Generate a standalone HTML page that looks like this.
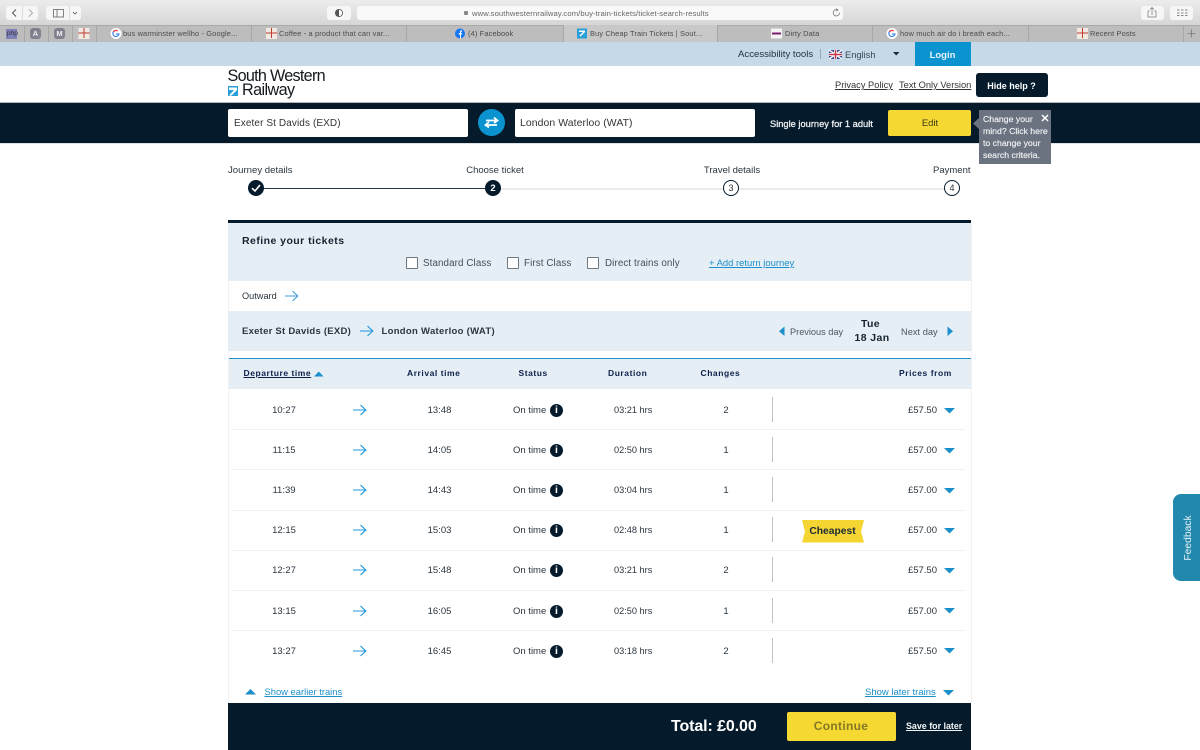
<!DOCTYPE html>
<html lang="en"><head><meta charset="utf-8"><title>Buy Cheap Train Tickets</title>
<style>
html,body{margin:0;padding:0;width:1200px;height:750px;overflow:hidden;background:#fff}
body{position:relative;font-family:"Liberation Sans",sans-serif;color:#1c2a36}
.b{position:absolute}
.t{position:absolute;white-space:nowrap;line-height:14px;font-size:9.5px;color:#2b3640;margin-top:1px}
.z{margin-top:0}
.c{transform:translateX(-50%)}
.r{text-align:right}
.tab{font-size:7.4px;color:#4a4a4a;letter-spacing:.15px;margin-top:0}
.h{font-weight:bold;font-size:8.5px;color:#0b1f4a;letter-spacing:.55px;margin-top:-1px}
.d{left:614px;font-size:9.2px;margin-top:0}
.sep{position:absolute;left:233px;width:732px;height:1px;background:#eef0f2}
.vd{position:absolute;left:772px;width:1px;height:25px;background:#bfc3c6}
.tabsep{position:absolute;top:25px;width:1px;height:17px;background:#a8a8a8}
.cb{position:absolute;width:12px;height:12px;box-sizing:border-box;border:1px solid #6f7780;background:#fff;border-radius:1px}
.i{position:absolute;left:550px;width:13px;height:13px;background:#051b2c;border-radius:50%}
.it{position:absolute;white-space:nowrap;left:556.5px;transform:translateX(-50%);font-size:10.5px;line-height:13px;font-weight:bold;color:#fff}
svg{position:absolute;overflow:visible}
.lnk{color:#1b8fc9;text-decoration:underline}
</style></head><body>

<!-- browser toolbar -->
<div class="b" style="left:0;top:0;width:1200px;height:25px;background:linear-gradient(#ececec,#d6d6d6)"></div>
<div class="b" style="left:6px;top:6px;width:32px;height:14px;background:#f6f6f6;border-radius:3px"></div>
<div class="b" style="left:22px;top:6px;width:1px;height:14px;background:#dcdcdc"></div>
<svg style="left:0;top:0" width="100" height="25"><path d="M16 9.5L12.5 13L16 16.5" fill="none" stroke="#555" stroke-width="1"/><path d="M29 9.5L32.5 13L29 16.5" fill="none" stroke="#aaa" stroke-width="1"/></svg>
<div class="b" style="left:46px;top:6px;width:35px;height:14px;background:#f6f6f6;border-radius:3px"></div>
<div class="b" style="left:69px;top:6px;width:1px;height:14px;background:#dcdcdc"></div>
<svg style="left:0;top:0" width="100" height="25"><rect x="53.5" y="9.5" width="10" height="7.5" fill="none" stroke="#666" stroke-width=".8"/><path d="M57 9.5V17" stroke="#666" stroke-width=".8"/><path d="M73 12L75 14L77 12" fill="none" stroke="#555" stroke-width=".8"/></svg>
<div class="b" style="left:327px;top:6px;width:24px;height:14px;background:#f6f6f6;border-radius:3px"></div>
<svg style="left:0;top:0" width="360" height="25"><circle cx="339" cy="13" r="3.6" fill="#fff" stroke="#555" stroke-width=".8"/><path d="M339 9.4a3.6 3.6 0 0 0 0 7.2z" fill="#555"/></svg>
<div class="b" style="left:357px;top:6px;width:486px;height:14px;background:#f9f9f9;border-radius:3px"></div>
<div class="b" style="left:464px;top:11px;width:4px;height:4px;background:#888;border-radius:1px"></div>
<div class="t z" style="left:472px;top:8px;line-height:11px;font-size:7.65px;color:#666;letter-spacing:.1px">www.southwesternrailway.com/buy-train-tickets/ticket-search-results</div>
<svg style="left:0;top:0" width="850" height="25"><path d="M838 10a3.2 3.2 0 1 0 1.6 2.6" fill="none" stroke="#777" stroke-width=".8"/><path d="M836 8.5l2 1.5l-2 1.3" fill="none" stroke="#777" stroke-width=".7"/></svg>
<div class="b" style="left:1141px;top:6px;width:23px;height:14px;background:#f6f6f6;border-radius:3px"></div>
<div class="b" style="left:1170px;top:6px;width:23px;height:14px;background:#f6f6f6;border-radius:3px"></div>
<svg style="left:0;top:0" width="1200" height="25"><path d="M1149.5 11h-1.5v6h8v-6h-1.5M1152 15V8M1150 9.5l2-2l2 2" fill="none" stroke="#777" stroke-width=".7"/><path d="M1177 10h2.5M1181 10h2.5M1185 10h2.5M1177 13h2.5M1181 13h2.5M1185 13h2.5M1177 15.5h2.5M1181 15.5h2.5M1185 15.5h2.5" stroke="#888" stroke-width="1"/></svg>

<!-- tab bar -->
<div class="b" style="left:0;top:25px;width:1200px;height:17px;background:#bdbdbd;border-top:1px solid #aaa;box-sizing:border-box"></div>
<div class="b" style="left:563px;top:25px;width:154px;height:17px;background:#c8c8c8"></div>
<div class="tabsep" style="left:24px"></div><div class="tabsep" style="left:48px"></div><div class="tabsep" style="left:72px"></div><div class="tabsep" style="left:96px"></div><div class="tabsep" style="left:251px"></div><div class="tabsep" style="left:406px"></div><div class="tabsep" style="left:563px"></div><div class="tabsep" style="left:717px"></div><div class="tabsep" style="left:872px"></div><div class="tabsep" style="left:1028px"></div><div class="tabsep" style="left:1183px"></div>
<div class="b" style="left:6px;top:29px;width:11px;height:10px;background:#7e80b8"></div>
<div class="t z" style="left:7px;top:28px;line-height:11px;font-size:6.5px;color:#333">php</div>
<div class="b" style="left:30px;top:28px;width:11px;height:11px;background:#81818f;border-radius:3px"></div>
<div class="t c z" style="left:35.5px;top:28px;line-height:11px;font-size:7.5px;font-weight:bold;color:#eee">A</div>
<div class="b" style="left:54px;top:28px;width:11px;height:11px;background:#81818f;border-radius:3px"></div>
<div class="t c z" style="left:59.5px;top:28px;line-height:11px;font-size:7.5px;font-weight:bold;color:#eee">M</div>
<svg style="left:0;top:0" width="1200" height="42">
<rect x="78.5" y="28" width="11" height="11" fill="#f1e9e2"/><path d="M78.5 33h11M84 28v10" stroke="#c0392b" stroke-width="1"/>
<rect x="266" y="28" width="11" height="11" fill="#f1e9e2"/><path d="M266 33h11M271.5 28v10" stroke="#c0392b" stroke-width="1"/>
<rect x="1077" y="28" width="11" height="11" fill="#f1e9e2"/><path d="M1077 33h11M1082.5 28v10" stroke="#c0392b" stroke-width="1"/>
<circle cx="116" cy="33.5" r="5.5" fill="#fff"/><path d="M116 30.5a3 3 0 1 0 2.9 3.5H116" fill="none" stroke="#4285f4" stroke-width="1.3"/><path d="M113.5 32a3 3 0 0 1 4.5-1" fill="none" stroke="#ea4335" stroke-width="1.3"/>
<circle cx="892" cy="33.5" r="5.5" fill="#fff"/><path d="M892 30.5a3 3 0 1 0 2.9 3.5H892" fill="none" stroke="#4285f4" stroke-width="1.3"/><path d="M889.5 32a3 3 0 0 1 4.5-1" fill="none" stroke="#ea4335" stroke-width="1.3"/>
<circle cx="460" cy="33.5" r="5" fill="#1877f2"/><path d="M460 38.5v-4h-1.2v-1.5h1.2v-1.3c0-1 .6-1.5 2-1.4v1.3c-.8 0-1 .1-1 .6v.8h1l-.2 1.5h-.8v4z" fill="#fff"/>
<rect x="577" y="28.5" width="10" height="10" fill="#2a9fd8"/><path d="M579 30.5h6v1.5l-4.5 4.5-1-1 3.5-3.5h-4z" fill="#fff"/>
<rect x="771" y="28.5" width="11" height="10" fill="#f4f4f4"/><path d="M772 33.5h9" stroke="#7a1f6a" stroke-width="2"/>
</svg>
<div class="t tab" style="left:123px;top:28px;line-height:11px">bus warminster wellho - Google...</div>
<div class="t tab" style="left:279px;top:28px;line-height:11px">Coffee - a product that can var...</div>
<div class="t tab" style="left:468px;top:28px;line-height:11px">(4) Facebook</div>
<div class="t tab" style="left:590px;top:28px;line-height:11px">Buy Cheap Train Tickets | Sout...</div>
<div class="t tab" style="left:785px;top:28px;line-height:11px">Dirty Data</div>
<div class="t tab" style="left:900px;top:28px;line-height:11px">how much air do i breath each...</div>
<div class="t tab" style="left:1090px;top:28px;line-height:11px">Recent Posts</div>
<svg style="left:0;top:0" width="1200" height="42"><path d="M1191.5 29.5v8M1187.5 33.5h8" stroke="#777" stroke-width=".8"/></svg>

<!-- top strip -->
<div class="b" style="left:0;top:42px;width:1200px;height:24px;background:#c5d9e8"></div>
<div class="t" style="left:738px;top:47px;font-size:9.6px;color:#26323c">Accessibility tools</div>
<div class="b" style="left:820px;top:49px;width:1px;height:10px;background:#9aa8b2"></div>
<svg style="left:829px;top:50px" width="13" height="9" viewBox="0 0 13 9"><rect width="13" height="9" fill="#3d4f8f"/><path d="M0 0L13 9M13 0L0 9" stroke="#fff" stroke-width="1.5"/><path d="M6.5 0V9M0 4.5H13" stroke="#fff" stroke-width="3"/><path d="M6.5 0V9M0 4.5H13" stroke="#c9374a" stroke-width="1.5"/></svg>
<div class="t" style="left:845px;top:47px;font-size:9.3px;color:#3a4650">English</div>
<svg style="left:893px;top:52px" width="7" height="4"><path d="M0 0H6.5L3.25 3.5Z" fill="#1c2a36"/></svg>
<div class="b" style="left:915px;top:42px;width:56px;height:24px;background:#0b93d0"></div>
<div class="t c" style="left:942.5px;top:48px;font-size:9.5px;font-weight:bold;color:#e8f4fb">Login</div>

<!-- header -->
<div class="t z" style="left:227.5px;top:67.5px;line-height:17px;font-size:16.2px;color:#14191e;letter-spacing:-.72px">South Western</div>
<div class="t z" style="left:242px;top:81.5px;line-height:17px;font-size:16.2px;color:#14191e;letter-spacing:-.6px">Railway</div>
<svg style="left:228px;top:86px" width="10" height="10" viewBox="0 0 10 10"><rect width="10" height="10" fill="#2a9fd8"/><path d="M1 1.5H9V4L3.5 9.5H1L6 4H1Z" fill="#fff"/></svg>
<div class="t" style="left:835px;top:77px;font-size:9.3px;color:#333;text-decoration:underline">Privacy Policy</div>
<div class="t" style="left:899px;top:77px;font-size:9.3px;color:#333;text-decoration:underline">Text Only Version</div>
<div class="b" style="left:976px;top:73px;width:72px;height:24px;background:#051b2c;border-radius:3px"></div>
<div class="t c" style="left:1011.5px;top:78px;font-size:9px;font-weight:bold;color:#fff">Hide help ?</div>

<!-- search bar -->
<div class="b" style="left:0;top:102px;width:1200px;height:1px;background:#b5b8ba"></div>
<div class="b" style="left:0;top:103px;width:1200px;height:40px;background:#051b2c"></div>
<div class="b" style="left:0;top:143px;width:1200px;height:1px;background:#dfe2e4"></div>
<div class="b" style="left:228px;top:109px;width:240px;height:28px;background:#fff;border-radius:2px"></div>
<div class="t" style="left:234px;top:116px;font-size:10px;color:#333;letter-spacing:.1px">Exeter St Davids (EXD)</div>
<div class="b" style="left:478px;top:109px;width:27px;height:27px;background:#0b93d0;border-radius:50%"></div>
<svg style="left:478px;top:109px" width="27" height="27"><path d="M8 11.5H19M16 8.5L19.5 11.5L16 14M19 16H8M11 13L7.5 16L11 18.5" fill="none" stroke="#fff" stroke-width="1.8"/></svg>
<div class="b" style="left:515px;top:109px;width:240px;height:28px;background:#fff;border-radius:2px"></div>
<div class="t" style="left:520px;top:116px;font-size:10.4px;color:#333;letter-spacing:.1px">London Waterloo (WAT)</div>
<div class="t" style="left:770px;top:116px;font-size:9.3px;color:#f2f4f6;-webkit-text-stroke:.25px #f2f4f6">Single journey for 1 adult</div>
<div class="b" style="left:888px;top:110px;width:83px;height:26px;background:#f5d831;border-radius:2px"></div>
<div class="t c" style="left:930px;top:116px;font-size:9.5px;color:#3a3a1a">Edit</div>
<div class="b" style="left:979px;top:110px;width:72px;height:54px;background:#6b7280"></div>
<svg style="left:973px;top:117px" width="7" height="14"><path d="M7 0V13L0 6.5Z" fill="#6b7280"/></svg>
<div class="t z" style="left:983px;top:113px;font-size:8.7px;line-height:12.1px;color:#f2f3f5;-webkit-text-stroke:.15px #f2f3f5">Change your<br>mind? Click here<br>to change your<br>search criteria.</div>
<svg style="left:1041px;top:114px" width="8" height="8"><path d="M1 1L7 7M7 1L1 7" stroke="#fff" stroke-width="1.5"/></svg>

<!-- steps -->
<div class="t" style="left:228px;top:163px;font-size:9.6px">Journey details</div>
<div class="t c" style="left:495px;top:163px;font-size:9.5px">Choose ticket</div>
<div class="t c" style="left:732px;top:163px;font-size:9.5px">Travel details</div>
<div class="t" style="left:933px;top:163px;font-size:9.5px">Payment</div>
<div class="b" style="left:256px;top:188px;width:237px;height:1px;background:#2c3843"></div>
<div class="b" style="left:493px;top:188px;width:459px;height:2px;background:#eceaec"></div>
<div class="b" style="left:248px;top:180px;width:16px;height:16px;background:#051b2c;border-radius:50%"></div>
<svg style="left:248px;top:180px" width="16" height="16"><path d="M4 8.2L7 11L12 5" fill="none" stroke="#fff" stroke-width="1.6"/></svg>
<div class="b" style="left:485px;top:180px;width:16px;height:16px;background:#051b2c;border-radius:50%"></div>
<div class="t c" style="left:493px;top:181px;font-size:9.5px;font-weight:bold;color:#fff">2</div>
<div class="b" style="left:723px;top:180px;width:14px;height:14px;background:#fff;border:1.3px solid #051b2c;border-radius:50%"></div>
<div class="t c" style="left:731px;top:180px;font-size:9px;color:#333">3</div>
<div class="b" style="left:944px;top:180px;width:14px;height:14px;background:#fff;border:1.3px solid #051b2c;border-radius:50%"></div>
<div class="t c" style="left:952px;top:180px;font-size:9px;color:#333">4</div>

<!-- main frame -->
<div class="b" style="left:228px;top:223px;width:1px;height:480px;background:#f0f1f2"></div>
<div class="b" style="left:971px;top:223px;width:1px;height:480px;background:#f0f1f2"></div>

<!-- refine -->
<div class="b" style="left:228px;top:220px;width:743px;height:3px;background:#051b2c"></div>
<div class="b" style="left:228px;top:223px;width:743px;height:58px;background:#e6eef5"></div>
<div class="t z" style="left:242px;top:233.5px;font-size:10.5px;font-weight:bold;color:#14232f;letter-spacing:.45px">Refine your tickets</div>
<div class="cb" style="left:406px;top:257px"></div>
<div class="t" style="left:423px;top:256px;font-size:9.8px;color:#444e57;letter-spacing:.1px">Standard Class</div>
<div class="cb" style="left:507px;top:257px"></div>
<div class="t" style="left:524px;top:256px;font-size:9.8px;color:#444e57;letter-spacing:.1px">First Class</div>
<div class="cb" style="left:587px;top:257px"></div>
<div class="t" style="left:605px;top:256px;font-size:9.8px;color:#444e57;letter-spacing:.1px">Direct trains only</div>
<div class="t lnk" style="left:709px;top:256px;font-size:9.45px;color:#1b8fc9">+ Add return journey</div>

<!-- outward -->
<div class="t z" style="left:242px;top:289px;font-size:9.2px">Outward</div>
<svg style="left:285px;top:290px" width="14" height="12"><path d="M0 6H12.5M7.5 1L12.800 6L7.500 11" fill="none" stroke="#3f9fdc" stroke-width="1.1"/></svg>

<!-- route header -->
<div class="b" style="left:228px;top:311px;width:743px;height:40px;background:#e6eef5"></div>
<div class="t" style="left:242px;top:324px;font-size:9.5px;font-weight:bold;color:#2b3640;letter-spacing:.25px">Exeter St Davids (EXD)</div>
<svg style="left:360px;top:325px" width="14" height="12"><path d="M0 6H12.5M7.5 1L12.8 6L7.5 11" fill="none" stroke="#1b95da" stroke-width="1.1"/></svg>
<div class="t" style="left:381.5px;top:324px;font-size:9.5px;font-weight:bold;color:#2b3640;letter-spacing:.3px">London Waterloo (WAT)</div>
<svg style="left:779px;top:326px" width="6" height="11"><path d="M5.5 .5V10L0 5.25Z" fill="#1b8fc9"/></svg>
<div class="t z" style="left:790px;top:324.5px;font-size:9.2px;color:#4a545d">Previous day</div>
<div class="t c z" style="left:870.5px;top:316.5px;font-size:10.5px;font-weight:bold;color:#14232f;letter-spacing:.4px">Tue</div>
<div class="t c z" style="left:872px;top:331px;font-size:10.5px;font-weight:bold;color:#14232f;letter-spacing:.4px">18 Jan</div>
<div class="t z" style="left:901px;top:324.5px;font-size:9.3px;color:#4a545d">Next day</div>
<svg style="left:947px;top:326px" width="6" height="11"><path d="M.5 .5V10L6 5.25Z" fill="#1b8fc9"/></svg>

<!-- table header -->
<div class="b" style="left:229px;top:358px;width:742px;height:1px;background:#1f96cf"></div>
<div class="b" style="left:229px;top:359px;width:742px;height:30px;background:#e6eef5"></div>
<div class="t h" style="left:243.5px;top:367px;text-decoration:underline">Departure time</div>
<svg style="left:314px;top:371px" width="10" height="6"><path d="M0 5.5H9.5L4.75 .5Z" fill="#1b8fc9"/></svg>
<div class="t h" style="left:407px;top:367px">Arrival time</div>
<div class="t h" style="left:518.5px;top:367px">Status</div>
<div class="t h" style="left:608px;top:367px">Duration</div>
<div class="t h" style="left:700.5px;top:367px">Changes</div>
<div class="t h" style="left:899px;top:367px">Prices from</div>

<!-- row 1 -->
<div class="t c" style="left:284px;top:403px">10:27</div>
<svg style="left:353px;top:404px" width="14" height="12"><path d="M0 6H12.5M7.5 1L12.8 6L7.5 11" fill="none" stroke="#1b95da" stroke-width="1.1"/></svg>
<div class="t c" style="left:439.5px;top:403px">13:48</div>
<div class="t" style="left:513px;top:403px">On time</div>
<div class="i" style="top:404px"></div><div class="it" style="top:404px">i</div>
<div class="t d" style="top:403px">03:21 hrs</div>
<div class="t c" style="left:726px;top:403px">2</div>
<div class="vd" style="top:397px"></div>
<div class="t r" style="right:263px;top:403px">£57.50</div>
<svg style="left:944px;top:408px" width="11" height="6"><path d="M0 0H11L5.5 5.5Z" fill="#1b8fc9"/></svg>
<div class="sep" style="top:429px"></div>

<!-- row 2 -->
<div class="t c" style="left:284px;top:443px">11:15</div>
<svg style="left:353px;top:444px" width="14" height="12"><path d="M0 6H12.5M7.5 1L12.8 6L7.5 11" fill="none" stroke="#1b95da" stroke-width="1.1"/></svg>
<div class="t c" style="left:439.5px;top:443px">14:05</div>
<div class="t" style="left:513px;top:443px">On time</div>
<div class="i" style="top:444px"></div><div class="it" style="top:444px">i</div>
<div class="t d" style="top:443px">02:50 hrs</div>
<div class="t c" style="left:726px;top:443px">1</div>
<div class="vd" style="top:437px"></div>
<div class="t r" style="right:263px;top:443px">£57.00</div>
<svg style="left:944px;top:448px" width="11" height="6"><path d="M0 0H11L5.5 5.5Z" fill="#1b8fc9"/></svg>
<div class="sep" style="top:469px"></div>

<!-- row 3 -->
<div class="t c" style="left:284px;top:483px">11:39</div>
<svg style="left:353px;top:484px" width="14" height="12"><path d="M0 6H12.5M7.5 1L12.8 6L7.5 11" fill="none" stroke="#1b95da" stroke-width="1.1"/></svg>
<div class="t c" style="left:439.5px;top:483px">14:43</div>
<div class="t" style="left:513px;top:483px">On time</div>
<div class="i" style="top:484px"></div><div class="it" style="top:484px">i</div>
<div class="t d" style="top:483px">03:04 hrs</div>
<div class="t c" style="left:726px;top:483px">1</div>
<div class="vd" style="top:477px"></div>
<div class="t r" style="right:263px;top:483px">£57.00</div>
<svg style="left:944px;top:488px" width="11" height="6"><path d="M0 0H11L5.5 5.5Z" fill="#1b8fc9"/></svg>
<div class="sep" style="top:509.5px"></div>

<!-- row 4 -->
<div class="t c" style="left:284px;top:523px">12:15</div>
<svg style="left:353px;top:524px" width="14" height="12"><path d="M0 6H12.5M7.5 1L12.8 6L7.5 11" fill="none" stroke="#1b95da" stroke-width="1.1"/></svg>
<div class="t c" style="left:439.5px;top:523px">15:03</div>
<div class="t" style="left:513px;top:523px">On time</div>
<div class="i" style="top:524px"></div><div class="it" style="top:524px">i</div>
<div class="t d" style="top:523px">02:48 hrs</div>
<div class="t c" style="left:726px;top:523px">1</div>
<div class="vd" style="top:517px"></div>
<svg style="left:802px;top:520px" width="62" height="23"><path d="M0 0H62L59 11.5L62 22.5H0L3 11.5Z" fill="#f5d532"/></svg>
<div class="t c z" style="left:832.5px;top:524.5px;font-size:10.3px;font-weight:bold;color:#1c2a36">Cheapest</div>
<div class="t r" style="right:263px;top:523px">£57.00</div>
<svg style="left:944px;top:528px" width="11" height="6"><path d="M0 0H11L5.5 5.5Z" fill="#1b8fc9"/></svg>
<div class="sep" style="top:550px"></div>

<!-- row 5 -->
<div class="t c" style="left:284px;top:563px">12:27</div>
<svg style="left:353px;top:564px" width="14" height="12"><path d="M0 6H12.5M7.5 1L12.8 6L7.5 11" fill="none" stroke="#1b95da" stroke-width="1.1"/></svg>
<div class="t c" style="left:439.5px;top:563px">15:48</div>
<div class="t" style="left:513px;top:563px">On time</div>
<div class="i" style="top:564px"></div><div class="it" style="top:564px">i</div>
<div class="t d" style="top:563px">03:21 hrs</div>
<div class="t c" style="left:726px;top:563px">2</div>
<div class="vd" style="top:557px"></div>
<div class="t r" style="right:263px;top:563px">£57.50</div>
<svg style="left:944px;top:568px" width="11" height="6"><path d="M0 0H11L5.5 5.5Z" fill="#1b8fc9"/></svg>
<div class="sep" style="top:590px"></div>

<!-- row 6 -->
<div class="t c" style="left:284px;top:604px">13:15</div>
<svg style="left:353px;top:605px" width="14" height="12"><path d="M0 6H12.5M7.5 1L12.8 6L7.5 11" fill="none" stroke="#1b95da" stroke-width="1.1"/></svg>
<div class="t c" style="left:439.5px;top:604px">16:05</div>
<div class="t" style="left:513px;top:604px">On time</div>
<div class="i" style="top:605px"></div><div class="it" style="top:605px">i</div>
<div class="t d" style="top:604px">02:50 hrs</div>
<div class="t c" style="left:726px;top:604px">1</div>
<div class="vd" style="top:598px"></div>
<div class="t r" style="right:263px;top:604px">£57.00</div>
<svg style="left:944px;top:608px" width="11" height="6"><path d="M0 0H11L5.5 5.5Z" fill="#1b8fc9"/></svg>
<div class="sep" style="top:630px"></div>

<!-- row 7 -->
<div class="t c" style="left:284px;top:644px">13:27</div>
<svg style="left:353px;top:645px" width="14" height="12"><path d="M0 6H12.5M7.5 1L12.8 6L7.5 11" fill="none" stroke="#1b95da" stroke-width="1.1"/></svg>
<div class="t c" style="left:439.5px;top:644px">16:45</div>
<div class="t" style="left:513px;top:644px">On time</div>
<div class="i" style="top:645px"></div><div class="it" style="top:645px">i</div>
<div class="t d" style="top:644px">03:18 hrs</div>
<div class="t c" style="left:726px;top:644px">2</div>
<div class="vd" style="top:638px"></div>
<div class="t r" style="right:263px;top:644px">£57.50</div>
<svg style="left:944px;top:648px" width="11" height="6"><path d="M0 0H11L5.5 5.5Z" fill="#1b8fc9"/></svg>

<!-- show earlier / later -->
<svg style="left:245px;top:689px" width="11" height="6"><path d="M0 5.5H11L5.5 0Z" fill="#1b8fc9"/></svg>
<div class="t lnk z" style="left:264.5px;top:685px;font-size:9.4px">Show earlier trains</div>
<div class="t lnk" style="left:865px;top:685px;font-size:9.5px">Show later trains</div>
<svg style="left:943px;top:690px" width="11" height="6"><path d="M0 0H11L5.5 5.5Z" fill="#1b8fc9"/></svg>

<!-- bottom bar -->
<div class="b" style="left:228px;top:703px;width:743px;height:47px;background:#051b2c"></div>
<div class="t z" style="left:671px;top:718px;line-height:17px;font-size:16px;font-weight:bold;color:#fff;letter-spacing:-.1px">Total: £0.00</div>
<div class="b" style="left:787px;top:712px;width:109px;height:29px;background:#f5d831;border-radius:2px"></div>
<div class="t c z" style="left:841px;top:719px;font-size:12px;font-weight:bold;color:#857824;letter-spacing:.3px">Continue</div>
<div class="t z" style="left:906px;top:719px;font-size:8.9px;font-weight:bold;color:#f2f4f6;text-decoration:underline">Save for later</div>

<!-- feedback -->
<div class="b" style="left:1173px;top:494px;width:27px;height:87px;background:#2388ad;border-radius:8px 0 0 8px"></div>
<div class="t z" style="left:1189px;top:537.5px;font-size:10.3px;color:#eaf4f8;transform:translate(-50%,-50%) rotate(-90deg)">Feedback</div>

</body></html>
